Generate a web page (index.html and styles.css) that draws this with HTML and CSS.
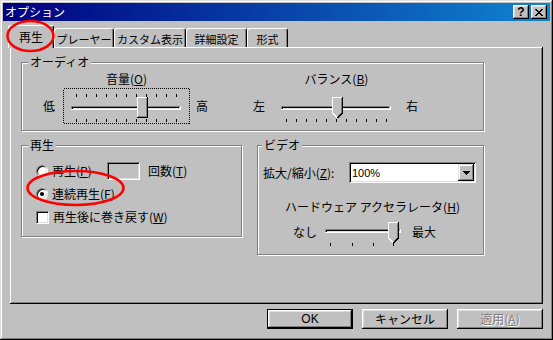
FILE: index.html
```html
<!DOCTYPE html>
<html lang="ja">
<head>
<meta charset="utf-8">
<title>オプション</title>
<link rel="stylesheet" href="styles.css">
</head>
<body>
<div class="window">
    <div class="titlebar">
        <span class="title">オプション</span>
        <div class="caption-buttons">
            <span class="cap-btn help">?</span>
            <span class="cap-btn">
                <svg width="8" height="7" viewBox="0 0 8 7" shape-rendering="crispEdges">
                    <path d="M0 0h2v1h1v1h2V1h1V0h2v1H7v1H6v1H5v1h1v1h1v1h1v1H6V6H5V5H3v1H2v1H0V6h1V5h1V4h1V3H2V2H1V1H0z" fill="#000"/>
                </svg>
            </span>
        </div>
    </div>

    <div class="client">
        <div class="tabs">
            <div class="tab selected">再生</div>
            <div class="tab tab-player">プレーヤー</div>
            <div class="tab tab-custom">カスタム表示</div>
            <div class="tab tab-detail">詳細設定</div>
            <div class="tab tab-format">形式</div>
        </div>

        <div class="panel">
            <div class="group audio">
                <span class="group-title">オーディオ</span>
                <div class="audio-row">
                    <div class="slider-block">
                        <div class="slider-caption">音量(<u>O</u>)</div>
                        <div class="slider-line">
                            <span class="end-label">低</span>
                            <svg class="trackbar" width="127" height="36" viewBox="0 0 127 36" shape-rendering="crispEdges">
                                <rect x="0.5" y="0.5" width="126" height="35" fill="none" stroke="#000" stroke-dasharray="1 1"/>
                                <path d="M13.5 6v3M23.5 6v3M33.5 6v3M43.5 6v3M53.5 6v3M63.5 6v3M73.5 6v3M83.5 6v3M93.5 6v3M103.5 6v3M113.5 6v3" stroke="#000"/>
                                <path d="M13.5 31v3M23.5 31v3M33.5 31v3M43.5 31v3M53.5 31v3M63.5 31v3M73.5 31v3M83.5 31v3M93.5 31v3M103.5 31v3M113.5 31v3" stroke="#000"/>
                                <path d="M8.5 22V18.5H117" stroke="#808080" fill="none"/>
                                <path d="M9.5 21V19.5H116" stroke="#000" fill="none"/>
                                <path d="M10 20.5H116.5V20" stroke="#dfdfdf" fill="none"/>
                                <path d="M8 21.5H117.5V18" stroke="#fff" fill="none"/>
                                <rect x="74" y="9" width="11" height="21" fill="#c0c0c0"/>
                                <path d="M74.5 29V9.5H84" stroke="#fff" fill="none"/>
                                <path d="M74 29.5H84.5V9" stroke="#000" fill="none"/>
                                <path d="M75 28.5H83.5V10" stroke="#808080" fill="none"/>
                            </svg>
                            <span class="end-label">高</span>
                        </div>
                    </div>
                    <div class="slider-block">
                        <div class="slider-caption">バランス(<u>B</u>)</div>
                        <div class="slider-line">
                            <span class="end-label">左</span>
                            <svg class="trackbar" width="127" height="36" viewBox="0 0 127 36" shape-rendering="crispEdges">
                                <path d="M13.5 31v3M23.5 31v3M33.5 31v3M43.5 31v3M53.5 31v3M63.5 31v3M73.5 31v3M83.5 31v3M93.5 31v3M103.5 31v3M113.5 31v3" stroke="#000"/>
                                <path d="M8.5 22V18.5H117" stroke="#808080" fill="none"/>
                                <path d="M9.5 21V19.5H116" stroke="#000" fill="none"/>
                                <path d="M10 20.5H116.5V20" stroke="#dfdfdf" fill="none"/>
                                <path d="M8 21.5H117.5V18" stroke="#fff" fill="none"/>
                                <path d="M59 9H70V25L64.5 30.5L59 25Z" fill="#c0c0c0"/>
                                <path d="M59.5 25V9.5H69M59.5 25L64.5 30" stroke="#fff" fill="none"/>
                                <path d="M69.5 9V25L64.5 30" stroke="#000" fill="none"/>
                                <path d="M68.5 10V24.5L64.5 28.5" stroke="#808080" fill="none"/>
                            </svg>
                            <span class="end-label">右</span>
                        </div>
                    </div>
                </div>
            </div>

            <div class="lower">
                <div class="group play">
                    <span class="group-title">再生</span>
                    <div class="opt-row first">
                        <span class="radio"></span>
                        <span class="opt-label fixed">再生(<u>P</u>)</span>
                        <span class="count-box"></span>
                        <span class="count-label">回数(<u>T</u>)</span>
                    </div>
                    <div class="opt-row second">
                        <span class="radio checked"></span>
                        <span class="opt-label">連続再生(<u>F</u>)</span>
                    </div>
                    <div class="opt-row third">
                        <span class="checkbox"></span>
                        <span class="opt-label">再生後に巻き戻す(<u>W</u>)</span>
                    </div>
                </div>

                <div class="group video">
                    <span class="group-title video-title">ビデオ</span>
                    <div class="zoom-row">
                        <span class="zoom-label">拡大/縮小(<u>Z</u>):</span>
                        <div class="combo">
                            <span class="combo-value">100%</span>
                            <span class="combo-btn">
                                <svg width="7" height="4" viewBox="0 0 7 4" shape-rendering="crispEdges">
                                    <path d="M0 0h7v1H6v1H5v1H4v1H3V3H2V2H1V1H0z" fill="#000"/>
                                </svg>
                            </span>
                        </div>
                    </div>
                    <div class="hw-caption">ハードウェア アクセラレータ(<u>H</u>)</div>
                    <div class="hw-row">
                        <span class="hw-label">なし</span>
                        <svg class="trackbar" width="85" height="28" viewBox="0 0 85 28" shape-rendering="crispEdges">
                            <path d="M10.5 23v3M32.5 23v3M53.5 23v3M73.5 23v3" stroke="#000"/>
                            <path d="M5.5 13V9.5H80" stroke="#808080" fill="none"/>
                            <path d="M6.5 12V10.5H79" stroke="#000" fill="none"/>
                            <path d="M7 11.5H79.5V11" stroke="#dfdfdf" fill="none"/>
                            <path d="M5 12.5H80.5V9" stroke="#fff" fill="none"/>
                            <path d="M68 2H79V18L73.5 23.5L68 18Z" fill="#c0c0c0"/>
                            <path d="M68.5 18V2.5H78M68.5 18L73.5 23" stroke="#fff" fill="none"/>
                            <path d="M78.5 2V18L73.5 23" stroke="#000" fill="none"/>
                            <path d="M77.5 3V17.5L73.5 21.5" stroke="#808080" fill="none"/>
                        </svg>
                        <span class="hw-label max">最大</span>
                    </div>
                </div>
            </div>
        </div>

        <div class="buttons">
            <span class="btn default">OK</span>
            <span class="btn">キャンセル</span>
            <span class="btn disabled">適用(<u>A</u>)</span>
        </div>
    </div>

    <svg class="marks" width="553" height="340" viewBox="0 0 553 340">
        <ellipse cx="30.5" cy="36" rx="23" ry="15" fill="none" stroke="#f00" stroke-width="2.5"/>
        <ellipse cx="75.5" cy="188" rx="48" ry="17" fill="none" stroke="#f00" stroke-width="2.5"/>
    </svg>
</div>
</body>
</html>
```

FILE: styles.css
```css
* {
    box-sizing: border-box;
}

body {
    margin: 0;
    background-color: #c0c0c0;
    font-family: "MS UI Gothic", "Noto Sans CJK JP", sans-serif;
    font-size: 12px;
    color: #000;
}

u {
    text-decoration: underline;
    text-underline-offset: 1px;
}

.window {
    position: relative;
    width: 553px;
    height: 340px;
    padding: 3px;
    background-color: #c0c0c0;
    box-shadow: inset -1px -1px #000, inset 1px 1px #dfdfdf, inset -2px -2px #808080, inset 2px 2px #fff;
}

/* title bar */
.titlebar {
    height: 18px;
    display: flex;
    align-items: center;
    justify-content: space-between;
    padding: 0 3px 0 2px;
    background: linear-gradient(to right, #000080, #1084d0);
    color: #fff;
}

.title {
    line-height: 14px;
}

.caption-buttons {
    display: flex;
    gap: 2px;
}

.cap-btn {
    width: 16px;
    height: 14px;
    display: flex;
    align-items: center;
    justify-content: center;
    background-color: #c0c0c0;
    box-shadow: inset -1px -1px #000, inset 1px 1px #fff, inset -2px -2px #808080, inset 2px 2px #dfdfdf;
}

.cap-btn.help {
    font-family: "Liberation Sans", sans-serif;
    font-weight: bold;
    font-size: 12px;
    line-height: 12px;
    color: #000;
    padding-bottom: 1px;
}

/* tabs */
.client {
    padding: 4px 7px 0 7px;
}

.tabs {
    position: relative;
    z-index: 1;
    display: flex;
    align-items: flex-end;
    height: 22px;
    margin-left: -2px;
}

.tab {
    height: 19px;
    display: flex;
    align-items: center;
    justify-content: center;
    padding-top: 1px;
    white-space: nowrap;
    font-size: 11px;
    background-color: #c0c0c0;
    border-top: 1px solid #fff;
    border-left: 1px solid #fff;
    border-right: 1px solid #000;
    border-radius: 3px 3px 0 0;
    box-shadow: inset -1px 0 #808080;
}

.tab.selected {
    width: 46px;
    height: 23px;
    margin-bottom: -1px;
    padding-bottom: 2px;
    font-size: 12px;
}

.tab-player { width: 60px; }
.tab-custom { width: 72px; }
.tab-detail { width: 61px; }
.tab-format { width: 41px; }

.panel {
    height: 257px;
    padding: 15px 0 0 11px;
    box-shadow: inset -1px -1px #000, inset 1px 1px #fff, inset -2px -2px #808080;
}

/* group boxes */
.group {
    position: relative;
    border: 1px solid #808080;
    box-shadow: inset 1px 1px #fff, 1px 1px #fff;
}

.group-title {
    position: absolute;
    top: -8px;
    left: 6px;
    padding: 0 2px;
    line-height: 14px;
    background-color: #c0c0c0;
}

.video-title {
    left: 4px;
}

.audio {
    width: 463px;
    height: 69px;
    padding: 10px 0 0 21px;
}

.audio-row {
    display: flex;
    gap: 45px;
}

.slider-caption {
    width: 127px;
    margin-left: 20px;
    text-align: center;
    line-height: 12px;
}

.slider-line {
    display: flex;
    align-items: center;
    margin-top: 3px;
}

.end-label {
    width: 12px;
    line-height: 14px;
}

.slider-line .trackbar {
    display: block;
    margin: 0 6px 0 8px;
}

.lower {
    display: flex;
    align-items: flex-start;
    gap: 15px;
    margin-top: 14px;
}

/* play group */
.play {
    width: 221px;
    height: 92px;
    padding: 0 0 0 14px;
}

.opt-row {
    display: flex;
    align-items: center;
    height: 14px;
}

.opt-row.first {
    height: 18px;
    margin-top: 16px;
}

.opt-row.second {
    margin-top: 7px;
}

.opt-row.third {
    margin-top: 9px;
}

.radio {
    position: relative;
    flex: none;
    width: 12px;
    height: 12px;
    border-radius: 50%;
    background-color: #fff;
    border: 1px solid;
    border-color: #808080 #fff #fff #808080;
    box-shadow: inset 1px 1px #000, inset -1px -1px #dfdfdf;
}

.radio.checked::after {
    content: "";
    position: absolute;
    left: 3px;
    top: 3px;
    width: 4px;
    height: 4px;
    border-radius: 50%;
    background-color: #000;
}

.checkbox {
    flex: none;
    width: 13px;
    height: 13px;
    background-color: #fff;
    border: 1px solid;
    border-color: #808080 #fff #fff #808080;
    box-shadow: inset 1px 1px #000, inset -1px -1px #dfdfdf;
}

.opt-label {
    margin-left: 4px;
    line-height: 14px;
    white-space: nowrap;
}

.opt-label.fixed {
    width: 55px;
}

.count-box {
    width: 33px;
    height: 18px;
    border: 1px solid;
    border-color: #808080 #fff #fff #808080;
    box-shadow: inset 1px 1px #000, inset -1px -1px #dfdfdf;
}

.count-label {
    margin-left: 8px;
    line-height: 14px;
}

/* video group */
.video {
    width: 227px;
    height: 110px;
    padding: 16px 0 0 5px;
}

.zoom-row {
    display: flex;
    align-items: center;
    height: 21px;
}

.zoom-label {
    width: 86px;
    line-height: 14px;
    white-space: nowrap;
}

.combo {
    display: flex;
    align-items: center;
    justify-content: space-between;
    width: 127px;
    height: 21px;
    padding: 2px;
    background-color: #fff;
    box-shadow: inset 1px 1px #808080, inset -1px -1px #fff, inset 2px 2px #000, inset -2px -2px #dfdfdf;
}

.combo-value {
    padding-left: 1px;
    font-family: "Liberation Sans", "Noto Sans CJK JP", sans-serif;
    font-size: 11px;
    line-height: 14px;
}

.combo-btn {
    width: 16px;
    height: 17px;
    display: flex;
    align-items: center;
    justify-content: center;
    background-color: #c0c0c0;
    box-shadow: inset -1px -1px #000, inset 1px 1px #dfdfdf, inset -2px -2px #808080, inset 2px 2px #fff;
}

.hw-caption {
    margin: 17px 0 0 22px;
    line-height: 14px;
    white-space: nowrap;
}

.hw-row {
    display: flex;
    align-items: flex-start;
    margin: 6px 0 0 30px;
}

.hw-label {
    margin-top: 5px;
    line-height: 14px;
}

.hw-row .trackbar {
    display: block;
    margin: 0 7px 0 3px;
}

/* dialog buttons */
.buttons {
    display: flex;
    justify-content: flex-end;
    gap: 9px;
    margin-top: 5px;
}

.btn {
    width: 86px;
    height: 20px;
    display: flex;
    align-items: center;
    justify-content: center;
    line-height: 14px;
    background-color: #c0c0c0;
    box-shadow: inset -1px -1px #000, inset 1px 1px #fff, inset -2px -2px #808080, inset 2px 2px #dfdfdf;
}

.btn.default {
    font-family: "Liberation Sans", sans-serif;
    border: 1px solid #000;
}

.btn.disabled {
    color: #808080;
    text-shadow: 1px 1px #fff;
}

.marks {
    position: absolute;
    top: 0;
    left: 0;
    z-index: 5;
    pointer-events: none;
}
```
